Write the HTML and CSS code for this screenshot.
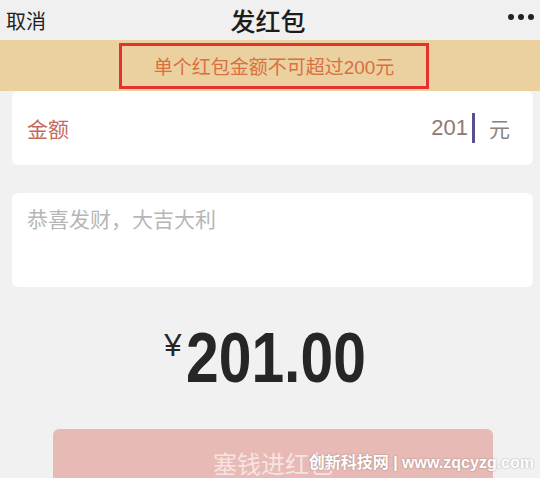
FILE: index.html
```html
<!DOCTYPE html>
<html lang="zh-CN">
<head>
    <meta charset="UTF-8">
    <title>发红包</title>
    <link rel="stylesheet" href="styles.css">
</head>
<body class="page">
<div class="topbar">
    <span class="cancel">取消</span>
    <span class="title">发红包</span>
    <span class="more"><i></i><i></i><i></i></span>
</div>
<div class="banner">
    <div class="notice">单个红包金额不可超过200元</div>
</div>
<div class="card amount-row">
    <span class="label">金额</span>
    <span class="value">201<b class="caret"></b><span class="unit">元</span></span>
</div>
<div class="card greeting">
    <span class="placeholder">恭喜发财，大吉大利</span>
</div>
<div class="total">
    <span class="yen">¥</span><span class="num">201.00</span>
</div>
<div class="submit">塞钱进红包</div>
<div class="watermark">创新科技网 | www.zqcyzg.com</div>
</body>
</html>
```

FILE: styles.css
```css
.page {
    margin: 0;
    height: 478px;
    overflow: hidden;
    position: relative;
    background: #f1f1f1;
    font-family: "Liberation Sans", "Noto Sans CJK SC", sans-serif;
}

.topbar {
    height: 40px;
    display: grid;
    grid-template-columns: 1fr auto 1fr;
    align-items: center;
    padding: 0 6px 0 6px;
    background: #f0f0f0;
}

.cancel {
    font-size: 20px;
    color: #222;
}

.title {
    font-size: 25px;
    color: #1c1c1c;
    font-weight: 500;
    margin-left: -4px;
}

.more {
    justify-self: end;
    display: flex;
    gap: 4px;
    padding-bottom: 6px;
}

.more i {
    width: 6px;
    height: 6px;
    border-radius: 50%;
    background: #222;
}

.banner {
    height: 51px;
    background: #ebd0a0;
    display: flex;
    justify-content: center;
    align-items: center;
}

.notice {
    width: 304px;
    height: 40px;
    margin-left: 8px;
    border: 3px solid #e6322f;
    display: flex;
    justify-content: center;
    align-items: center;
    font-size: 19px;
    color: #d8703f;
}

.card {
    margin: 0 7px 0 12px;
    background: #fff;
    border-radius: 6px;
}

.amount-row {
    height: 74px;
    display: flex;
    justify-content: space-between;
    align-items: center;
    padding: 0 23px 0 15px;
}

.label {
    font-size: 21px;
    color: #c36a5d;
}

.value {
    display: flex;
    align-items: center;
    font-size: 22px;
    color: #927873;
}

.caret {
    width: 3px;
    height: 30px;
    margin-left: 4px;
    background: #5b4f8e;
}

.unit {
    margin-left: 14px;
    font-size: 21px;
    color: #8c817d;
}

.greeting {
    margin-top: 28px;
    height: 94px;
    padding: 12px 15px 0;
    box-sizing: border-box;
}

.placeholder {
    font-size: 21px;
    line-height: 30px;
    color: #b6b6b6;
}

.total {
    margin-top: 37px;
    display: flex;
    justify-content: center;
    align-items: flex-start;
    padding-right: 10px;
    color: #262626;
}

.yen {
    font-size: 31px;
    line-height: 1;
    margin-top: 6px;
    margin-right: 4px;
}

/* DIN-like narrow digits */
.num {
    display: inline-block;
    font-size: 70px;
    line-height: 68px;
    font-weight: bold;
    transform: scaleX(0.84);
    transform-origin: left top;
    margin-right: -34px;
}

.submit {
    margin: 37px 47px 0 53px;
    height: 64px;
    border-radius: 6px;
    background: #e8bab5;
    color: #f7e3e1;
    font-size: 24px;
    display: flex;
    justify-content: center;
    padding-top: 16px;
    box-sizing: border-box;
}

.watermark {
    position: absolute;
    right: 6px;
    bottom: 5px;
    font-size: 16px;
    font-weight: bold;
    color: #fff;
    text-shadow: 0 0 2px rgba(0, 0, 0, 0.35);
}
```
